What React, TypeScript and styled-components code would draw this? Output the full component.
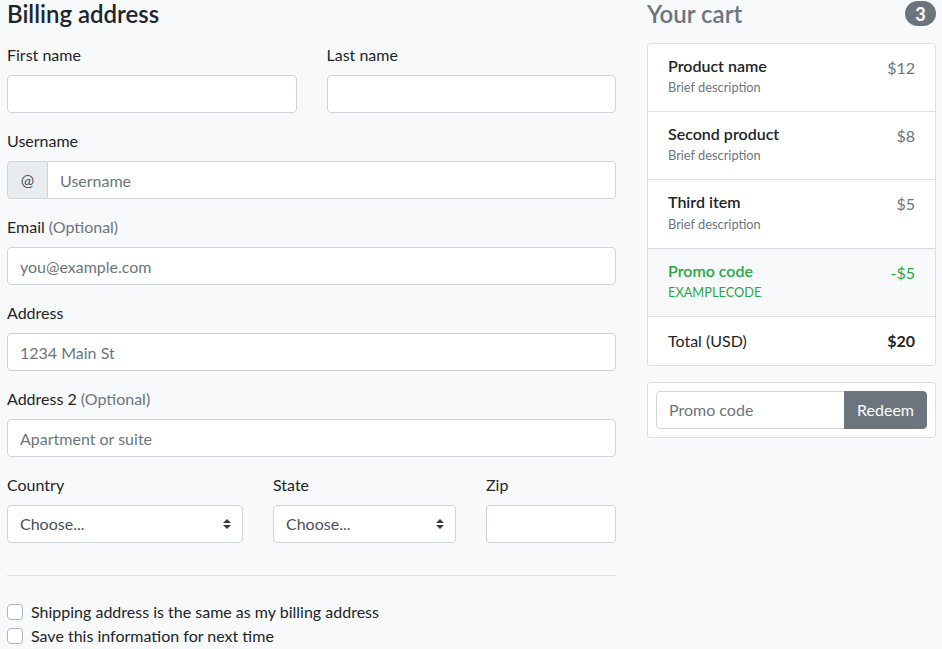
import React from 'react';
import styled, { createGlobalStyle } from 'styled-components';

const GlobalStyle = createGlobalStyle`
  html, body, #root {
    margin: 0;
    padding: 0;
  }
  body {
    background: #f8f9fa;
    color: #212529;
    font-family: Lato, 'Noto Sans', sans-serif;
    font-size: 16px;
    line-height: 1.5;
  }
  *, *::before, *::after {
    box-sizing: border-box;
  }
`;

const Page = styled.div`
  display: grid;
  grid-template-columns: 1fr 289px;
  column-gap: 31px;
  padding: 0 6px 0 7px;
  align-items: start;
`;

const Heading = styled.h4<{ $muted?: boolean }>`
  display: flex;
  justify-content: space-between;
  align-items: center;
  margin: 0 0 16px;
  height: 27px;
  font-size: 24px;
  line-height: 27px;
  font-weight: 600;
  color: ${p => (p.$muted ? '#6c757d' : '#212529')};
`;

const Badge = styled.span`
  display: inline-flex;
  align-items: center;
  justify-content: center;
  min-width: 31px;
  height: 25px;
  padding: 0 10px;
  border-radius: 160px;
  background: #6c757d;
  color: #fff;
  font-size: 18px;
  font-weight: 700;
  line-height: 1;
`;

const Row = styled.div<{ $cols: string }>`
  display: grid;
  grid-template-columns: ${p => p.$cols};
  column-gap: 30px;
`;

const Field = styled.div`
  margin-bottom: 16px;
`;

const Label = styled.label`
  display: block;
  margin-bottom: 8px;
  line-height: 24px;
`;

const Muted = styled.span`
  color: #6c757d;
`;

const Input = styled.input<{ $joined?: 'left' | 'right' }>`
  display: block;
  width: 100%;
  min-width: 0;
  height: 38px;
  padding: 6px 12px;
  font: inherit;
  font-size: 16px;
  line-height: 1.5;
  color: #495057;
  background: #fff;
  border: 1px solid #ced4da;
  border-radius: ${p =>
    p.$joined === 'left' ? '0 4px 4px 0' : p.$joined === 'right' ? '4px 0 0 4px' : '4px'};
  margin-left: ${p => (p.$joined === 'left' ? '-1px' : '0')};
  outline: none;

  &::placeholder {
    color: #6c757d;
    opacity: 1;
  }
`;

const InputGroup = styled.div`
  display: flex;
  align-items: stretch;
  width: 100%;
`;

const Addon = styled.span`
  display: flex;
  align-items: center;
  justify-content: center;
  flex: 0 0 41px;
  height: 38px;
  background: #e9ecef;
  border: 1px solid #ced4da;
  border-radius: 4px 0 0 4px;
  color: #495057;
`;

const SelectWrap = styled.div`
  position: relative;
`;

const Select = styled.select`
  display: block;
  width: 100%;
  height: 38px;
  padding: 6px 28px 6px 12px;
  font: inherit;
  font-size: 16px;
  color: #495057;
  background: #fff;
  border: 1px solid #ced4da;
  border-radius: 4px;
  appearance: none;
  outline: none;
`;

const SelectArrow = styled.svg`
  position: absolute;
  right: 12px;
  top: 14px;
  width: 8px;
  height: 10px;
  pointer-events: none;
`;

const Divider = styled.hr`
  margin: 16px 0 24px;
  border: 0;
  border-top: 1px solid rgba(0, 0, 0, 0.1);
`;

const CheckRow = styled.label`
  display: flex;
  align-items: flex-start;
  gap: 8px;
  line-height: 24px;
`;

const CheckBox = styled.input`
  appearance: none;
  flex: 0 0 16px;
  width: 16px;
  height: 16px;
  margin: 4px 0 0;
  background: #fff;
  border: 1px solid #adb5bd;
  border-radius: 4px;
`;

const CartList = styled.ul`
  list-style: none;
  margin: 0 0 16px;
  padding: 0;
  background: #fff;
  border: 1px solid rgba(0, 0, 0, 0.125);
  border-radius: 4px;
  overflow: hidden;
`;

const CartItem = styled.li<{ $tone?: 'success' }>`
  display: flex;
  justify-content: space-between;
  align-items: flex-start;
  padding: 12px 20px;
  line-height: 24px;
  background: ${p => (p.$tone === 'success' ? '#f8f9fa' : '#fff')};
  color: ${p => (p.$tone === 'success' ? '#28a745' : '#212529')};

  & + & {
    border-top: 1px solid rgba(0, 0, 0, 0.125);
  }
`;

const ItemTitle = styled.h6`
  margin: 0;
  font-size: 16px;
  line-height: 1.2;
  font-weight: 600;
`;

const ItemDesc = styled.div<{ $tone?: 'success' }>`
  font-size: 12.8px;
  line-height: 24px;
  color: ${p => (p.$tone === 'success' ? '#28a745' : '#6c757d')};
`;

const Price = styled.span<{ $tone?: 'success' }>`
  color: ${p => (p.$tone === 'success' ? '#28a745' : '#6c757d')};
`;

const Strong = styled.strong`
  font-weight: 700;
`;

const PromoCard = styled.form`
  padding: 8px;
  background: #fff;
  border: 1px solid rgba(0, 0, 0, 0.125);
  border-radius: 4px;
`;

const Button = styled.button`
  flex: 0 0 auto;
  height: 38px;
  padding: 6px 12px;
  font: inherit;
  font-size: 16px;
  color: #fff;
  background: #6c757d;
  border: 1px solid #6c757d;
  border-radius: 0 4px 4px 0;
  margin-left: -1px;
`;

const items = [
  { name: 'Product name', desc: 'Brief description', price: '$12' },
  { name: 'Second product', desc: 'Brief description', price: '$8' },
  { name: 'Third item', desc: 'Brief description', price: '$5' },
];

const Arrow = () => (
  <SelectArrow viewBox="0 0 4 5">
    <path fill="#343a40" d="M2 0L0 2h4zm0 5L0 3h4z" />
  </SelectArrow>
);

const App: React.FC = () => (
  <>
    <GlobalStyle />
    <Page>
      <div>
        <Heading>Billing address</Heading>
        <Row $cols="1fr 1fr">
          <Field>
            <Label>First name</Label>
            <Input />
          </Field>
          <Field>
            <Label>Last name</Label>
            <Input />
          </Field>
        </Row>
        <Field>
          <Label>Username</Label>
          <InputGroup>
            <Addon>@</Addon>
            <Input $joined="left" placeholder="Username" />
          </InputGroup>
        </Field>
        <Field>
          <Label>
            Email <Muted>(Optional)</Muted>
          </Label>
          <Input placeholder="you@example.com" />
        </Field>
        <Field>
          <Label>Address</Label>
          <Input placeholder="1234 Main St" />
        </Field>
        <Field>
          <Label>
            Address 2 <Muted>(Optional)</Muted>
          </Label>
          <Input placeholder="Apartment or suite" />
        </Field>
        <Row $cols="236fr 183fr 130fr">
          <Field>
            <Label>Country</Label>
            <SelectWrap>
              <Select defaultValue="">
                <option value="">Choose...</option>
              </Select>
              <Arrow />
            </SelectWrap>
          </Field>
          <Field>
            <Label>State</Label>
            <SelectWrap>
              <Select defaultValue="">
                <option value="">Choose...</option>
              </Select>
              <Arrow />
            </SelectWrap>
          </Field>
          <Field>
            <Label>Zip</Label>
            <Input />
          </Field>
        </Row>
        <Divider />
        <CheckRow>
          <CheckBox type="checkbox" />
          Shipping address is the same as my billing address
        </CheckRow>
        <CheckRow>
          <CheckBox type="checkbox" />
          Save this information for next time
        </CheckRow>
      </div>

      <div>
        <Heading $muted>
          Your cart
          <Badge>3</Badge>
        </Heading>
        <CartList>
          {items.map(item => (
            <CartItem key={item.name}>
              <div>
                <ItemTitle>{item.name}</ItemTitle>
                <ItemDesc>{item.desc}</ItemDesc>
              </div>
              <Price>{item.price}</Price>
            </CartItem>
          ))}
          <CartItem $tone="success">
            <div>
              <ItemTitle>Promo code</ItemTitle>
              <ItemDesc $tone="success">EXAMPLECODE</ItemDesc>
            </div>
            <Price $tone="success">-$5</Price>
          </CartItem>
          <CartItem>
            <span>Total (USD)</span>
            <Strong>$20</Strong>
          </CartItem>
        </CartList>
        <PromoCard onSubmit={e => e.preventDefault()}>
          <InputGroup>
            <Input $joined="right" placeholder="Promo code" />
            <Button type="submit">Redeem</Button>
          </InputGroup>
        </PromoCard>
      </div>
    </Page>
  </>
);

export default App;
